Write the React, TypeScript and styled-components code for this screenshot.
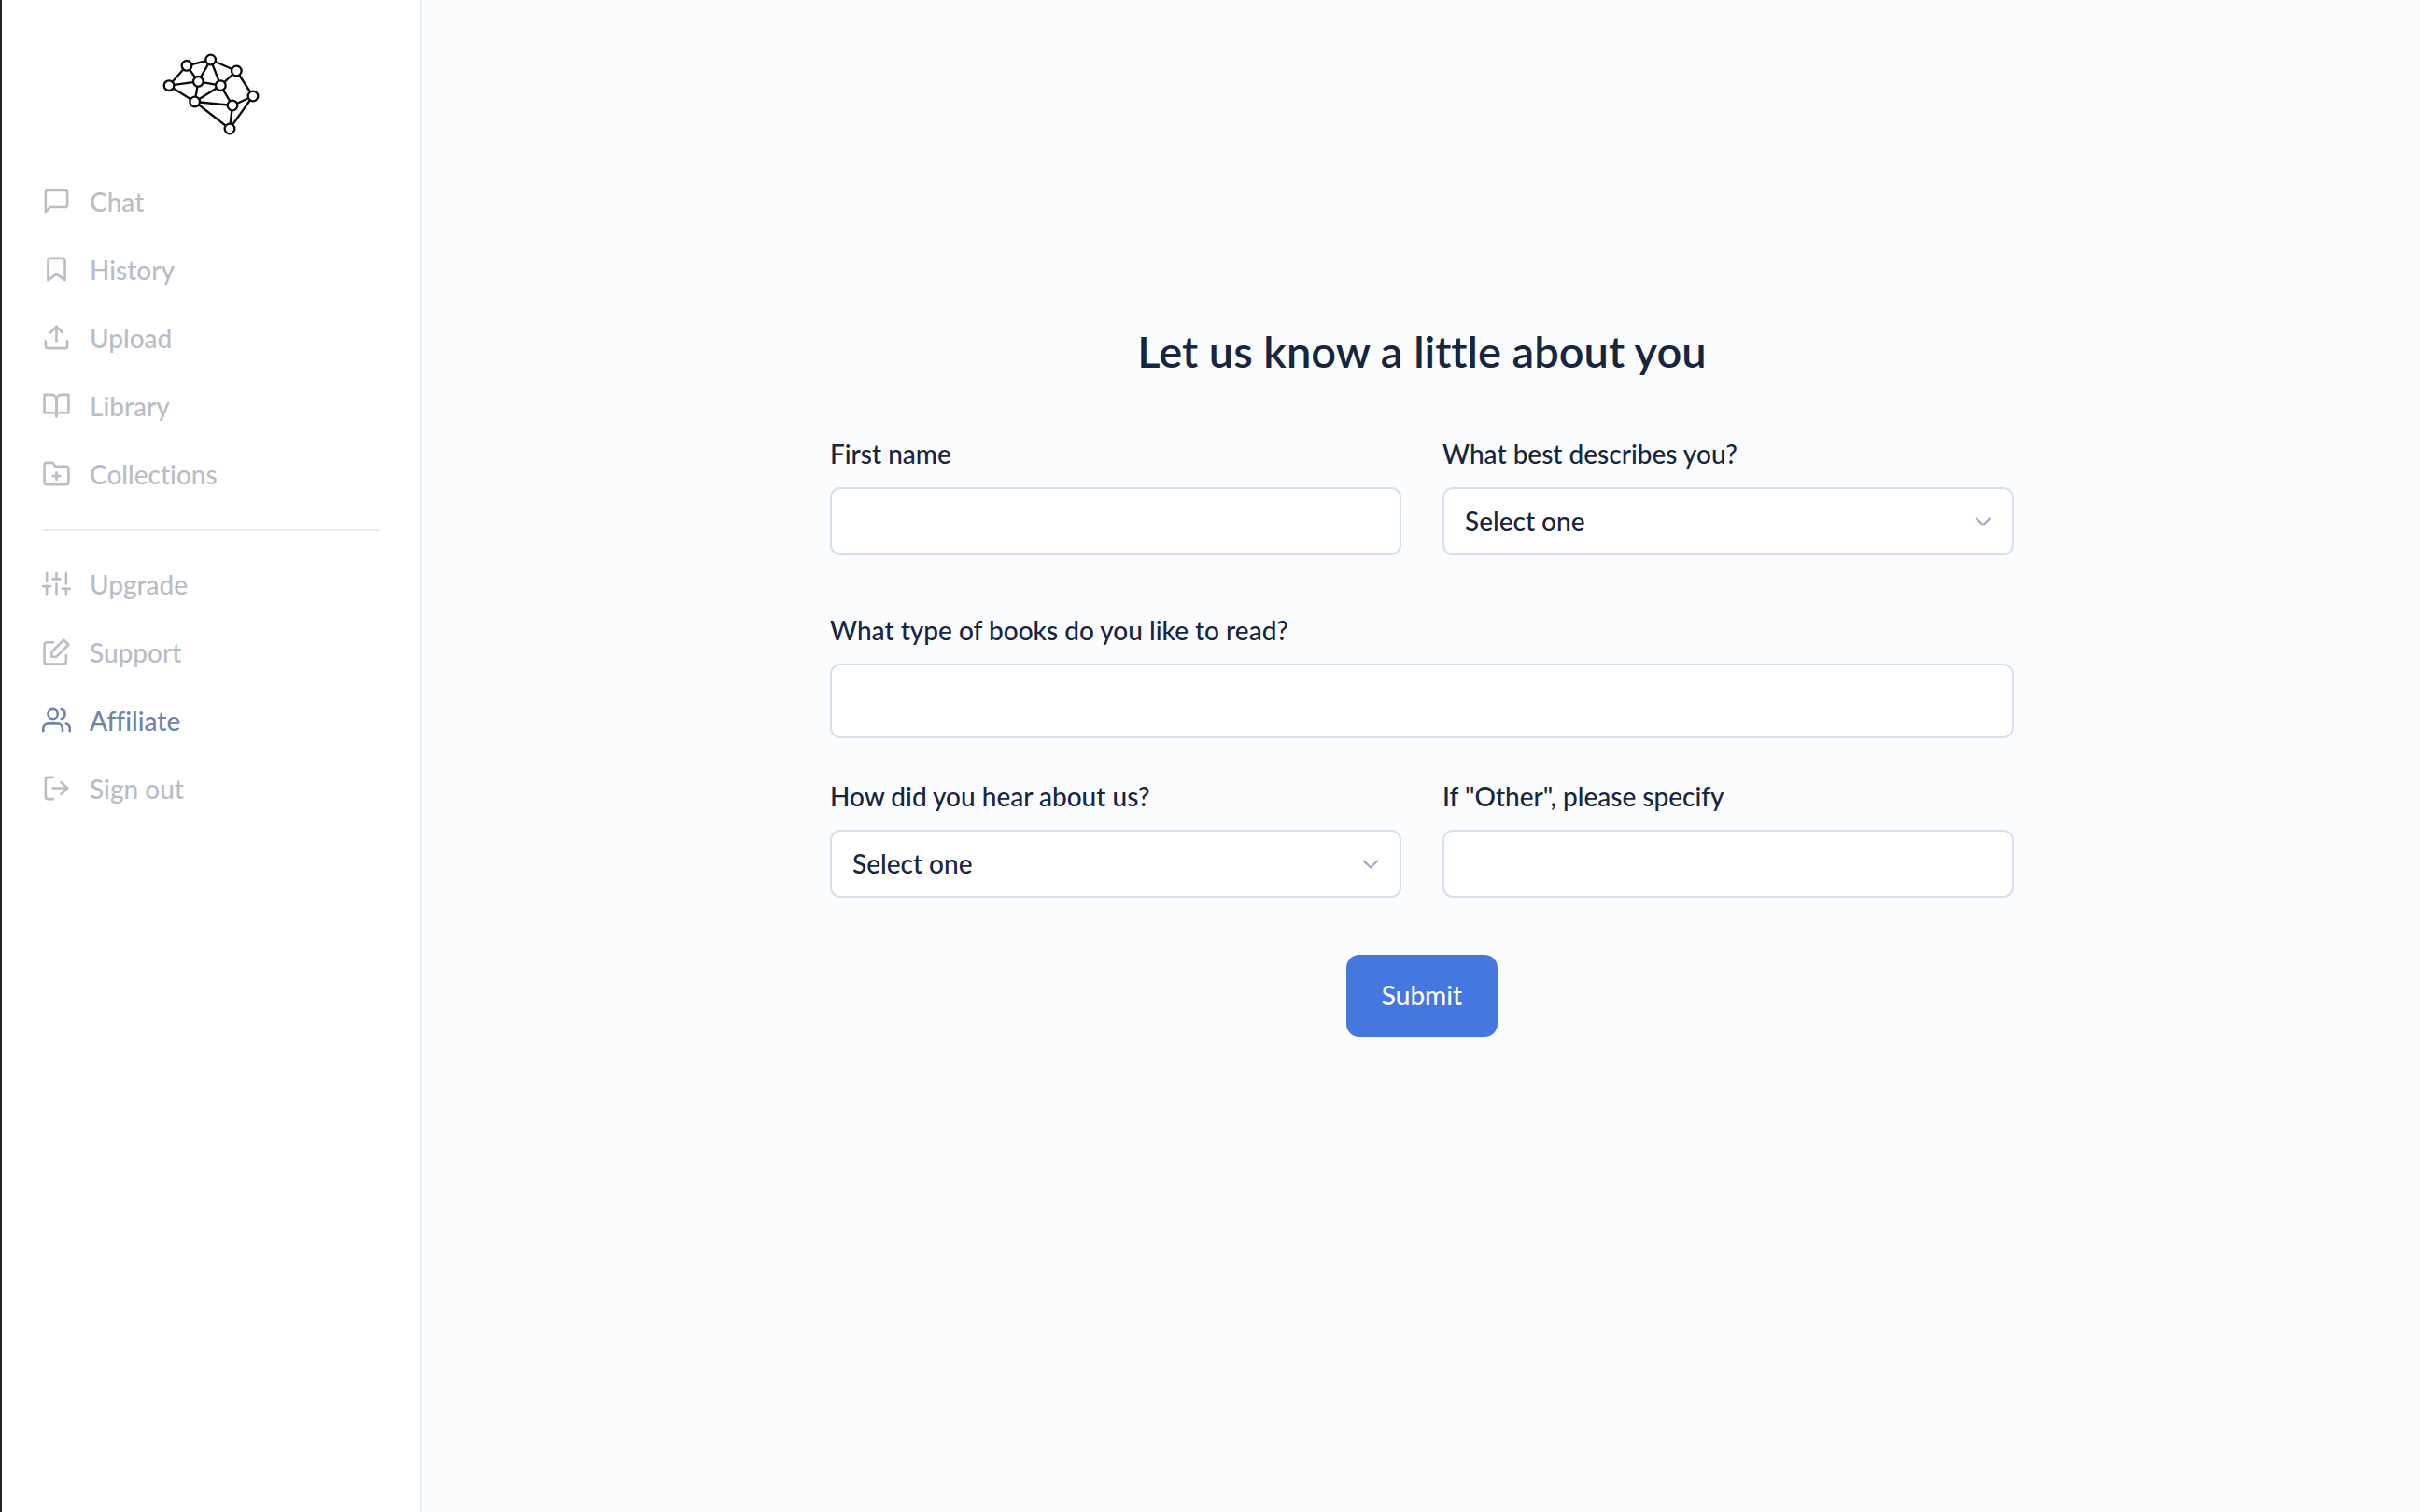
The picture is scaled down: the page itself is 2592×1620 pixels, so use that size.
import React from "react";
import styled, { createGlobalStyle } from "styled-components";
import {
  FiBookmark,
  FiBookOpen,
  FiChevronDown,
  FiFolderPlus,
  FiLogOut,
  FiMessageSquare,
  FiSliders,
  FiUpload,
  FiUsers,
} from "react-icons/fi";

const GlobalStyle = createGlobalStyle`
  *, *::before, *::after { box-sizing: border-box; }
  body {
    margin: 0;
    background: #fafcfe;
    color: #17253f;
    font-family: Lato, "Liberation Sans", sans-serif;
    font-size: 28px;
    line-height: 36px;
    font-variant-ligatures: none;
  }
`;

const Page = styled.div`
  display: flex;
  min-height: 100vh;
`;

const Sidebar = styled.aside`
  flex: none;
  width: 452px;
  padding: 57px 43px 44px;
  background: #ffffff;
  border-left: 2px solid #232427;
  border-right: 2px solid #e6eef7;
`;

const Brand = styled.a`
  display: block;
  margin-bottom: 34px;
`;

const LogoDrawing = styled.svg`
  display: block;
  width: 104px;
  height: 88px;
  margin: 0 auto;
`;

const NavList = styled.ul`
  list-style: none;
  margin: 0;
  padding: 0;
`;

const NavLink = styled.a<{ $active?: boolean }>`
  display: flex;
  align-items: center;
  gap: 20px;
  height: 73px;
  color: ${(p) => (p.$active ? "#7084a5" : "#b8bdc6")};
  font-weight: 500;
  text-decoration: none;

  svg {
    flex: none;
    width: 31px;
    height: 31px;
  }
`;

const Divider = styled.hr`
  height: 2px;
  margin: 23px 0 20px;
  border: 0;
  background: #e6ecf8;
`;

const Main = styled.main`
  flex: 1;
  min-width: 0;
  padding: 346px 44px 44px 46px;
`;

const Form = styled.form`
  display: flex;
  flex-direction: column;
  max-width: 1268px;
  margin: 0 auto;
`;

const Title = styled.h1`
  margin: 0 0 62px;
  font-size: 47px;
  line-height: 60px;
  font-weight: 600;
  text-align: center;
`;

const Row = styled.div<{ $gap: number }>`
  display: grid;
  grid-auto-flow: column;
  grid-auto-columns: minmax(0, 1fr);
  gap: 44px;
  margin-bottom: ${(p) => p.$gap}px;
`;

const Field = styled.div`
  display: flex;
  flex-direction: column;
  gap: 18px;
`;

const Label = styled.label`
  font-weight: 500;
`;

const TextInput = styled.input<{ $tall?: boolean }>`
  width: 100%;
  height: ${(p) => (p.$tall ? 80 : 73)}px;
  padding: 0 22px;
  border: 2px solid #d5dfee;
  border-radius: 11px;
  background: #ffffff;
  color: inherit;
  font: inherit;
  outline: none;
`;

const SelectWrap = styled.div`
  display: grid;
  align-items: center;

  > * {
    grid-area: 1 / 1;
  }

  svg {
    justify-self: end;
    width: 28px;
    height: 28px;
    margin-right: 19px;
    color: #9dacca;
    pointer-events: none;
  }
`;

const SelectBox = styled.select`
  appearance: none;
  width: 100%;
  height: 73px;
  padding: 0 64px 2px 22px;
  border: 2px solid #d5dfee;
  border-radius: 11px;
  background: #ffffff;
  color: inherit;
  font: inherit;
  font-weight: 500;
  outline: none;
`;

const SubmitButton = styled.button`
  align-self: center;
  height: 88px;
  padding: 0 38px 2px;
  border: 0;
  border-radius: 14px;
  background: #4478df;
  color: #ffffff;
  font: inherit;
  font-weight: 500;
`;

const nodes = {
  a: [120, 90],
  b: [197, 71],
  c: [280, 107],
  d: [63, 154],
  e: [157, 141],
  f: [229, 154],
  g: [146, 206],
  h: [333, 188],
  i: [267, 218],
  j: [258, 293],
} as const;

type NodeKey = keyof typeof nodes;

const links: [NodeKey, NodeKey][] = [
  ["a", "b"], ["a", "d"], ["a", "e"], ["b", "e"], ["b", "f"], ["b", "c"],
  ["c", "f"], ["c", "h"], ["d", "e"], ["d", "g"], ["e", "f"], ["e", "g"],
  ["f", "g"], ["f", "i"], ["g", "i"], ["g", "j"], ["i", "h"], ["i", "j"],
  ["h", "j"],
];

function Logo() {
  return (
    <LogoDrawing viewBox="42 50 312 264" aria-hidden="true" stroke="#0c0c0c" strokeWidth="7" fill="#ffffff">
      {links.map(([from, to]) => (
        <line
          key={from + to}
          x1={nodes[from][0]}
          y1={nodes[from][1]}
          x2={nodes[to][0]}
          y2={nodes[to][1]}
        />
      ))}
      {Object.entries(nodes).map(([key, [cx, cy]]) => (
        <circle key={key} cx={cx} cy={cy} r="16" />
      ))}
    </LogoDrawing>
  );
}

function EditIcon() {
  return (
    <svg
      viewBox="0 0 24 24"
      fill="none"
      stroke="currentColor"
      strokeWidth="2"
      strokeLinecap="round"
      strokeLinejoin="round"
    >
      <path d="M20 14.66V20a2 2 0 0 1-2 2H4a2 2 0 0 1-2-2V6a2 2 0 0 1 2-2h5.34" />
      <polygon points="18 2 22 6 12 16 8 16 8 12 18 2" />
    </svg>
  );
}

interface NavItem {
  label: string;
  icon: React.ReactNode;
  active?: boolean;
}

const primaryItems: NavItem[] = [
  { label: "Chat", icon: <FiMessageSquare /> },
  { label: "History", icon: <FiBookmark /> },
  { label: "Upload", icon: <FiUpload /> },
  { label: "Library", icon: <FiBookOpen /> },
  { label: "Collections", icon: <FiFolderPlus /> },
];

const secondaryItems: NavItem[] = [
  { label: "Upgrade", icon: <FiSliders /> },
  { label: "Support", icon: <EditIcon /> },
  { label: "Affiliate", icon: <FiUsers />, active: true },
  { label: "Sign out", icon: <FiLogOut /> },
];

function Nav({ items }: { items: NavItem[] }) {
  return (
    <NavList>
      {items.map((item) => (
        <li key={item.label}>
          <NavLink href="#" $active={item.active}>
            {item.icon}
            {item.label}
          </NavLink>
        </li>
      ))}
    </NavList>
  );
}

function TextField({ id, label, tall }: { id: string; label: string; tall?: boolean }) {
  return (
    <Field>
      <Label htmlFor={id}>{label}</Label>
      <TextInput id={id} type="text" $tall={tall} />
    </Field>
  );
}

function SelectField({ id, label }: { id: string; label: string }) {
  return (
    <Field>
      <Label htmlFor={id}>{label}</Label>
      <SelectWrap>
        <SelectBox id={id}>
          <option>Select one</option>
        </SelectBox>
        <FiChevronDown />
      </SelectWrap>
    </Field>
  );
}

export default function App() {
  return (
    <Page>
      <GlobalStyle />
      <Sidebar>
        <Brand href="#" aria-label="Home">
          <Logo />
        </Brand>
        <nav>
          <Nav items={primaryItems} />
          <Divider />
          <Nav items={secondaryItems} />
        </nav>
      </Sidebar>
      <Main>
        <Form onSubmit={(event) => event.preventDefault()}>
          <Title>Let us know a little about you</Title>
          <Row $gap={62}>
            <TextField id="first-name" label="First name" />
            <SelectField id="role" label="What best describes you?" />
          </Row>
          <Row $gap={44}>
            <TextField id="books" label="What type of books do you like to read?" tall />
          </Row>
          <Row $gap={61}>
            <SelectField id="source" label="How did you hear about us?" />
            <TextField id="source-other" label={'If "Other", please specify'} />
          </Row>
          <SubmitButton type="submit">Submit</SubmitButton>
        </Form>
      </Main>
    </Page>
  );
}
